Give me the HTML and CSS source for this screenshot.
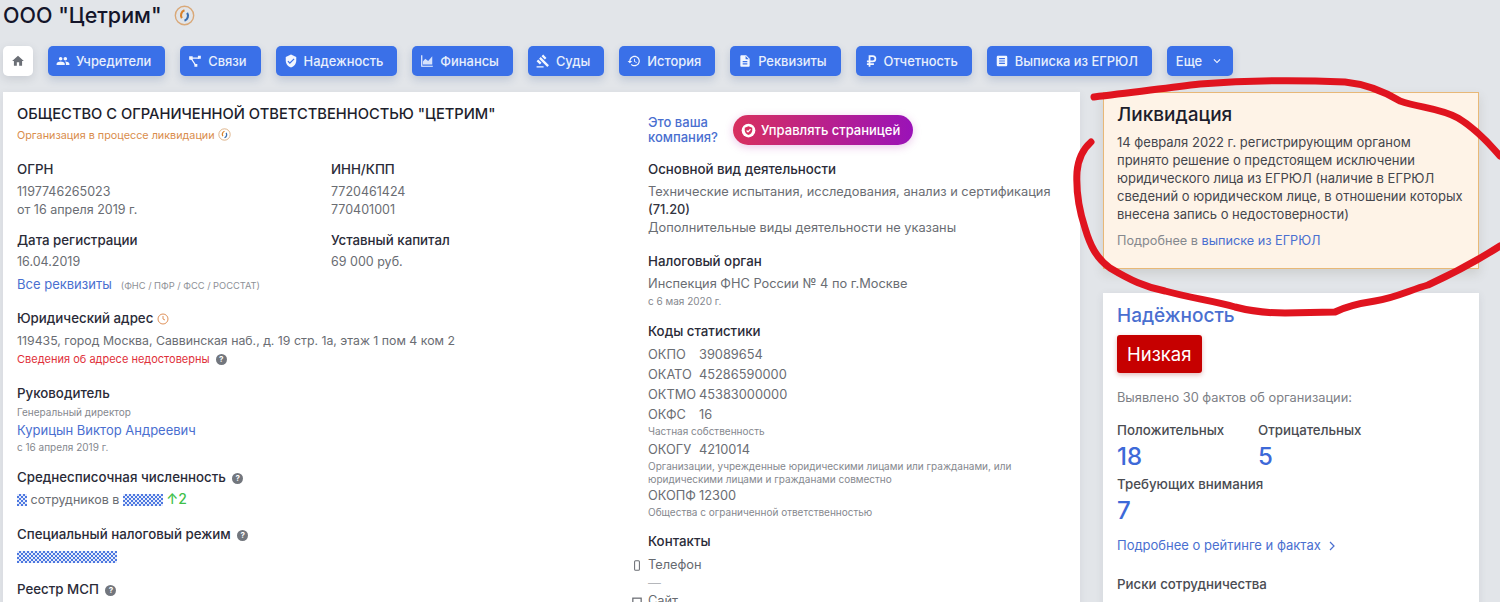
FILE: index.html
```html
<!DOCTYPE html>
<html lang="ru">
  <head>
    <meta charset="UTF-8" />
    <title>ООО "Цетрим"</title>
    <link rel="stylesheet" href="styles.css">
  </head>
  <body>
    <header class="title-row">
      <h1>ООО "Цетрим"</h1>
      <svg class="liq-icon liq-big" viewBox="0 0 24 24"><circle cx="12" cy="12" r="10.5"/><path class="liq-a" d="M12 6a6 6 0 0 0-3 9"/><path class="liq-b" d="M12 18a6 6 0 0 0 3-9"/></svg>
    </header>

    <nav class="nav">
      <a class="nav-home"><svg viewBox="0 0 24 24"><path d="M10 20v-6h4v6h5v-8h3L12 3 2 12h3v8z"/></svg></a>
      <a class="nav-btn"><svg viewBox="0 0 24 24"><path d="M16 11c1.66 0 3-1.34 3-3s-1.34-3-3-3-3 1.34-3 3 1.34 3 3 3zm-8 0c1.66 0 3-1.34 3-3S9.66 5 8 5 5 6.34 5 8s1.34 3 3 3zm0 2c-2.33 0-7 1.17-7 3.5V19h14v-2.5c0-2.33-4.67-3.5-7-3.5zm8 0c-.29 0-.62.02-.97.05 1.16.84 1.97 1.97 1.97 3.45V19h6v-2.5c0-2.33-4.67-3.5-7-3.5z"/></svg>Учредители</a>
      <a class="nav-btn"><svg viewBox="0 0 24 24"><path d="M2 4h6v6H2zM17 3h5v5h-5zM11 17h5v5h-5z"/><path class="thin" d="M5 7l8 12M5 7h14"/></svg>Связи</a>
      <a class="nav-btn"><svg viewBox="0 0 24 24"><path d="M12 1L3 5v6c0 5.55 3.84 10.74 9 12 5.16-1.26 9-6.45 9-12V5l-9-4zm-2 16l-4-4 1.41-1.41L10 14.17l6.59-6.59L18 9l-8 8z"/></svg>Надежность</a>
      <a class="nav-btn"><svg viewBox="0 0 24 24"><path d="M2 2h2v18h18v2H2z"/><path d="M5 18v-5l4-5 5 4 7-8v14z" opacity=".85"/></svg>Финансы</a>
      <a class="nav-btn"><svg viewBox="0 0 24 24"><path d="M1 21h12v2H1zM5.245 8.07l2.83-2.827 14.14 14.142-2.828 2.828zM12.317 1l5.657 5.656-2.83 2.83-5.654-5.66zM3.825 9.485l5.657 5.657-2.828 2.828-5.657-5.657z"/></svg>Суды</a>
      <a class="nav-btn"><svg viewBox="0 0 24 24"><path d="M13 3c-4.97 0-9 4.03-9 9H1l3.89 3.89.07.14L9 12H6c0-3.87 3.13-7 7-7s7 3.13 7 7-3.13 7-7 7c-1.93 0-3.68-.79-4.94-2.06l-1.42 1.42C8.27 19.99 10.51 21 13 21c4.97 0 9-4.03 9-9s-4.03-9-9-9zm-1 5v5l4.28 2.54.72-1.21-3.5-2.08V8H12z"/></svg>История</a>
      <a class="nav-btn"><svg viewBox="0 0 24 24"><path d="M14 2H6c-1.1 0-1.99.9-1.99 2L4 20c0 1.1.89 2 1.99 2H18c1.1 0 2-.9 2-2V8l-6-6zm2 16H8v-2h8v2zm0-4H8v-2h8v2zm-3-5V3.5L18.5 9H13z"/></svg>Реквизиты</a>
      <a class="nav-btn"><svg viewBox="0 0 24 24"><path d="M8 2h7a6 6 0 0 1 0 12h-4v2h6v3h-6v3H8v-3H5v-3h3v-2H5v-3h3zm3 3v6h4a3 3 0 0 0 0-6z"/></svg>Отчетность</a>
      <a class="nav-btn"><svg viewBox="0 0 24 24"><path d="M5 3h14a2 2 0 0 1 2 2v14a2 2 0 0 1-2 2H5a2 2 0 0 1-2-2V5a2 2 0 0 1 2-2zm2 4v2h10V7zm0 4v2h10v-2zm0 4v2h10v-2z"/></svg>Выписка из ЕГРЮЛ</a>
      <a class="nav-btn nav-more">Еще<svg viewBox="0 0 24 24"><path d="M7.41 8.59L12 13.17l4.59-4.58L18 10l-6 6-6-6z"/></svg></a>
    </nav>

    <div class="layout">
      <main class="card-main">
        <div class="col-info">
          <h2 class="org-name">ОБЩЕСТВО С ОГРАНИЧЕННОЙ ОТВЕТСТВЕННОСТЬЮ "ЦЕТРИМ"</h2>
          <div class="org-status">Организация в процессе ликвидации
            <svg class="liq-icon" viewBox="0 0 24 24"><circle cx="12" cy="12" r="10.5"/><path class="liq-a" d="M12 6a6 6 0 0 0-3 9"/><path class="liq-b" d="M12 18a6 6 0 0 0 3-9"/></svg>
          </div>

          <div class="pair pair-first">
            <div>
              <div class="label">ОГРН</div>
              <div class="value">1197746265023</div>
              <div class="value">от 16 апреля 2019 г.</div>
            </div>
            <div>
              <div class="label">ИНН/КПП</div>
              <div class="value">7720461424</div>
              <div class="value">770401001</div>
            </div>
          </div>
          <div class="pair pair-next">
            <div>
              <div class="label">Дата регистрации</div>
              <div class="value">16.04.2019</div>
            </div>
            <div>
              <div class="label">Уставный капитал</div>
              <div class="value">69 000 руб.</div>
            </div>
          </div>
          <div class="all-req"><a class="link">Все реквизиты</a><span class="req-note">(ФНС / ПФР / ФСС / РОССТАТ)</span></div>

          <section class="block block-addr">
            <div class="label">Юридический адрес
              <svg class="clock" viewBox="0 0 24 24"><circle cx="12" cy="12" r="10"/><path d="M12 6v6l4 2"/></svg>
            </div>
            <div class="value address">119435, город Москва, Саввинская наб., д. 19 стр. 1а, этаж 1 пом 4 ком 2</div>
            <div class="warn">Сведения об адресе недостоверны <span class="help">?</span></div>
          </section>

          <section class="block block-head">
            <div class="label">Руководитель</div>
            <div class="small">Генеральный директор</div>
            <a class="link name">Курицын Виктор Андреевич</a>
            <div class="small">с 16 апреля 2019 г.</div>
          </section>

          <section class="block block-staff">
            <div class="label">Среднесписочная численность <span class="help">?</span></div>
            <div class="value staff"><span class="masked mask-s"></span> сотрудников в <span class="masked mask-m"></span> <span class="up">↑2</span></div>
          </section>

          <section class="block block-tax">
            <div class="label">Специальный налоговый режим <span class="help">?</span></div>
            <div class="masked mask-l"></div>
          </section>

          <section class="block block-msp">
            <div class="label">Реестр МСП <span class="help">?</span></div>
          </section>
        </div>

        <div class="col-extra">
          <div class="claim">
            <a class="claim-text">Это ваша<br>компания?</a>
            <a class="claim-btn"><svg viewBox="0 0 24 24"><circle cx="12" cy="12" r="11"/><path class="claim-shield" d="M12 5l-6 2.5v4c0 3.4 2.5 6.4 6 7.5 3.5-1.100 6-4.100 6-7.500v-4z"/><path class="claim-check" d="M9 12l2.200 2.200L15.200 10"/></svg>Управлять страницей</a>
          </div>

          <section class="sub sub-okved">
            <div class="label">Основной вид деятельности</div>
            <div class="value">Технические испытания, исследования, анализ и сертификация</div>
            <div class="value"><b class="code">(71.20)</b></div>
            <div class="value">Дополнительные виды деятельности не указаны</div>
          </section>

          <section class="sub sub-tax">
            <div class="label">Налоговый орган</div>
            <div class="value">Инспекция ФНС России № 4 по г.Москве</div>
            <div class="small">с 6 мая 2020 г.</div>
          </section>

          <section class="sub sub-codes">
            <div class="label">Коды статистики</div>
            <div class="code-row"><span>ОКПО</span>39089654</div>
            <div class="code-row"><span>ОКАТО</span>45286590000</div>
            <div class="code-row"><span>ОКТМО</span>45383000000</div>
            <div class="code-row"><span>ОКФС</span>16</div>
            <div class="small code-note">Частная собственность</div>
            <div class="code-row"><span>ОКОГУ</span>4210014</div>
            <div class="small code-note code-note-wide">Организации, учрежденные юридическими лицами или гражданами, или<br>юридическими лицами и гражданами совместно</div>
            <div class="code-row"><span>ОКОПФ</span>12300</div>
            <div class="small code-note">Общества с ограниченной ответственностью</div>
          </section>

          <section class="sub sub-contacts">
            <div class="label">Контакты</div>
            <div class="contact"><svg class="contact-icon" viewBox="0 0 10 16"><rect x="1.500" y="1" width="7" height="14" rx="1.500"/></svg>Телефон</div>
            <div class="value dash">—</div>
            <div class="contact"><svg class="contact-icon" viewBox="0 0 12 10"><rect x="1" y="1" width="10" height="8"/></svg>Сайт</div>
          </section>
        </div>
      </main>

      <aside class="side">
        <div class="alert">
          <h3>Ликвидация</h3>
          <p>14 февраля 2022 г. регистрирующим органом<br>принято решение о предстоящем исключении<br>юридического лица из ЕГРЮЛ (наличие в ЕГРЮЛ<br>сведений о юридическом лице, в отношении которых<br>внесена запись о недостоверности)</p>
          <div class="alert-more">Подробнее в <a class="link">выписке из ЕГРЮЛ</a></div>
        </div>

        <div class="rating">
          <a class="rating-title">Надёжность</a>
          <div class="badge">Низкая</div>
          <div class="facts">Выявлено 30 фактов об организации:</div>
          <div class="fact-grid">
            <div>
              <div class="fact-label">Положительных</div>
              <div class="fact-num">18</div>
            </div>
            <div>
              <div class="fact-label">Отрицательных</div>
              <div class="fact-num">5</div>
            </div>
            <div class="fact-wide">
              <div class="fact-label">Требующих внимания</div>
              <div class="fact-num">7</div>
            </div>
          </div>
          <a class="link more">Подробнее о рейтинге и фактах<svg viewBox="0 0 10 12"><path d="M3 2l4 4-4 4"/></svg></a>
          <div class="fact-label risks">Риски сотрудничества</div>
        </div>
      </aside>
    </div>

    <!-- red marker drawn over the screenshot -->
    <svg class="scribble" viewBox="0 0 1500 602">
      <path d="M1094 97C1130 93 1165 88 1200 84C1250 80 1300 80 1345 82C1365 84 1385 92 1400 101C1420 108 1440 108 1458 118C1475 128 1488 142 1500 156"/>
      <path d="M1091 142C1082 150 1078 160 1077 172C1076 190 1079 210 1085 228C1090 245 1096 258 1110 268C1130 280 1145 287 1165 291C1190 298 1215 301 1235 307C1250 311 1265 313 1285 313L1335 312C1345 307 1355 304 1375 301C1395 298 1410 290 1428 285C1450 275 1475 262 1500 246"/>
    </svg>
  </body>
</html>
```

FILE: styles.css
```css
* {
  box-sizing: border-box;
}

html,
body {
  height: 602px;
  overflow: hidden;
}

body {
  position: relative;
  margin: 0;
  padding: 0 21px 0 3px;
  font-family: Inter, "Noto Sans", sans-serif;
  font-size: 13px;
  color: #666a70;
  background-color: #e2e5e9;
}

a {
  cursor: pointer;
}

.link {
  color: #4a6fd0;
}

/* title */
.title-row {
  display: flex;
  align-items: center;
  gap: 12px;
  height: 29px;
  padding-top: 1px;
}

h1 {
  margin: 0;
  font-size: 21.500px;
  font-weight: 500;
  color: #14152a;
}

.liq-icon {
  width: 13px;
  height: 13px;
  fill: none;
  vertical-align: -2px;
}

.liq-icon circle {
  stroke: #d9a878;
  stroke-width: 1.6;
}

.liq-a {
  stroke: #d9822b;
  stroke-width: 2.4;
}

.liq-b {
  stroke: #3b6fb0;
  stroke-width: 2.4;
}

.liq-big {
  width: 21px;
  height: 21px;
}

/* nav */
.nav {
  display: flex;
  gap: 15px;
  height: 30px;
  margin-top: 17px;
}

.nav-home {
  display: flex;
  align-items: center;
  justify-content: center;
  width: 30px;
  background-color: #fff;
  border-radius: 5px;
  box-shadow: 0 3px 8px rgba(60, 70, 90, 0.15);
}

.nav-home svg {
  width: 14px;
  height: 14px;
  fill: #6b6f76;
}

.nav-btn {
  display: flex;
  align-items: center;
  gap: 6px;
  padding: 0 14px 0 8px;
  font-size: 12.900px;
  font-weight: 500;
  color: #e8effc;
  white-space: nowrap;
  background-color: #3a70e8;
  border-radius: 5px;
  box-shadow: 0 4px 8px rgba(50, 80, 140, 0.2);
}

.nav-btn svg {
  width: 14px;
  height: 14px;
  fill: #f2f6ff;
}

.nav-btn .thin {
  fill: none;
  stroke: #f2f6ff;
  stroke-width: 2;
}

.nav-more {
  gap: 8px;
  padding: 0 9px;
}

/* main columns */
.layout {
  display: flex;
  gap: 23px;
  margin-top: 16px;
}

.card-main {
  display: flex;
  width: 1077px;
  height: 520px;
  overflow: hidden;
  background-color: #fff;
  box-shadow: 0 2px 8px rgba(60, 70, 90, 0.08);
}

.col-info {
  width: 645px;
  padding: 13px 0 0 14px;
}

.col-extra {
  width: 432px;
  padding: 23px 0 0 0;
}

.org-name {
  margin: 0;
  font-size: 14.700px;
  line-height: 18px;
  font-weight: 500;
  color: #1d1e2c;
}

.org-status {
  margin-top: 5px;
  font-size: 10.800px;
  line-height: 16px;
  color: #d98d4c;
}

.label {
  font-size: 13.300px;
  line-height: 18px;
  font-weight: 500;
  color: #2a2b38;
}

.value {
  font-size: 12.800px;
  line-height: 18px;
  color: #6a6d73;
}

.col-info .value {
  font-size: 12.500px;
}

.col-info .address {
  font-size: 12.300px;
}

.small {
  font-size: 10px;
  line-height: 14px;
  color: #85888e;
}

.code {
  font-weight: 500;
  color: #33343f;
}

.pair {
  display: grid;
  grid-template-columns: 314px 1fr;
}

.pair-first {
  margin-top: 16px;
}

.pair-first .label {
  margin-bottom: 5px;
}

.pair-next {
  margin-top: 12px;
}

.pair-next .label {
  margin-bottom: 4px;
}

.all-req {
  margin-top: 4px;
  line-height: 18px;
}

.req-note {
  margin-left: 9px;
  font-size: 9.300px;
  color: #8d9096;
}

.clock {
  width: 12px;
  height: 12px;
  fill: none;
  stroke: #e0925a;
  stroke-width: 2;
  vertical-align: -2px;
}

.help {
  display: inline-block;
  width: 11px;
  height: 11px;
  margin-left: 3px;
  font-size: 8px;
  line-height: 11px;
  font-weight: 700;
  text-align: center;
  color: #fff;
  background-color: #72767d;
  border-radius: 50%;
  vertical-align: 1px;
}

.warn {
  font-size: 11px;
  line-height: 18px;
  color: #e0303a;
}

.block-addr {
  margin-top: 14px;
}

.block-addr .label {
  margin-bottom: 5px;
}

.block-head {
  margin-top: 16px;
}

.block-head .small {
  margin-top: 3px;
}

.name {
  display: block;
  margin-top: 2px;
  line-height: 18px;
}

.block-head .name + .small {
  margin-top: 1px;
}

.block-staff {
  margin-top: 14px;
}

.block-staff .label {
  margin-bottom: 4px;
}

.block-tax {
  margin-top: 16px;
}

.block-tax .label {
  margin-bottom: 5px;
}

.block-msp {
  margin-top: 16px;
}

.masked {
  display: inline-block;
  height: 12px;
  background: repeating-conic-gradient(#4d78e0 0 25%, #e6ecfb 0 50%) 0 0 / 4px 4px;
  vertical-align: -2px;
}

.mask-s {
  width: 10px;
}

.mask-m {
  width: 40px;
}

.mask-l {
  width: 100px;
}

.up {
  font-size: 14px;
  font-weight: 500;
  color: #3fbf4a;
}

/* right part of main card */
.claim {
  display: flex;
  align-items: center;
  gap: 15px;
  height: 30px;
}

.claim-text {
  font-size: 13px;
  line-height: 15px;
  font-weight: 500;
  color: #4a6fd0;
}

.claim-btn {
  display: flex;
  align-items: center;
  gap: 5px;
  height: 30px;
  padding: 0 13px 0 8px;
  font-size: 13px;
  font-weight: 500;
  color: #fff;
  white-space: nowrap;
  background: linear-gradient(90deg, #d8305f, #9a12b8);
  border-radius: 15px;
  box-shadow: 0 2px 8px rgba(170, 30, 170, 0.25);
}

.claim-btn svg {
  width: 15px;
  height: 15px;
  fill: #fff;
}

.claim-shield {
  fill: #d8305f;
}

.claim-check {
  fill: none;
  stroke: #fff;
  stroke-width: 2;
}

.sub .label {
  margin-bottom: 5px;
}

.sub-okved {
  margin-top: 15px;
}

.sub-tax {
  margin-top: 15px;
}

.sub-tax .small {
  margin-top: 1px;
}

.sub-codes {
  margin-top: 14px;
}

.sub-contacts {
  margin-top: 13px;
}

.sub-contacts .label {
  margin-bottom: 6px;
}

.code-row {
  font-size: 12.800px;
  line-height: 20px;
  color: #6a6d73;
}

.code-row span {
  display: inline-block;
  width: 51px;
}

.code-note {
  margin-bottom: 2px;
  font-size: 10px;
  line-height: 13px;
}

.code-note-wide {
  margin-bottom: 0;
}

.contact {
  position: relative;
  font-size: 12.800px;
  line-height: 18px;
}

.contact-icon {
  position: absolute;
  top: 4px;
  left: -16px;
  width: 10px;
  height: 11px;
  fill: none;
  stroke: #6a6d73;
  stroke-width: 1.500;
}

.dash {
  color: #b5b7bb;
}

/* sidebar */
.side {
  width: 376px;
}

.alert {
  height: 177px;
  padding: 11px 13px 0;
  background-color: #fef3e7;
  border: 1px solid #e8b877;
  box-shadow: 0 5px 10px rgba(90, 80, 60, 0.15);
}

.alert h3 {
  margin: 0;
  font-size: 19px;
  line-height: 22px;
  font-weight: 500;
  color: #1d1e2c;
}

.alert p {
  margin: 7px 0 0;
  font-size: 13px;
  line-height: 18px;
  color: #44464c;
}

.alert-more {
  margin-top: 9px;
  font-size: 12.700px;
  line-height: 18px;
  color: #85888e;
}

.rating {
  height: 320px;
  margin-top: 24px;
  padding: 12px 14px 0;
  background-color: #fff;
  box-shadow: 0 2px 8px rgba(60, 70, 90, 0.1);
}

.rating-title {
  display: block;
  font-size: 19px;
  line-height: 22px;
  font-weight: 500;
  color: #4a6fd0;
}

.badge {
  display: inline-block;
  height: 38px;
  margin-top: 8px;
  padding: 0 10px;
  font-size: 18.500px;
  line-height: 38px;
  color: #fff;
  background-color: #c60000;
  border-radius: 3px;
  box-shadow: 0 2px 5px rgba(160, 30, 30, 0.3);
}

.facts {
  margin-top: 16px;
  font-size: 12.800px;
  line-height: 18px;
  color: #7d8086;
}

.fact-grid {
  display: grid;
  grid-template-columns: 141px 1fr;
  margin-top: 14px;
  row-gap: 3px;
}

.fact-wide {
  grid-column: span 2;
}

.fact-label {
  font-size: 13.300px;
  line-height: 18px;
  font-weight: 500;
  color: #4a4c52;
}

.fact-num {
  margin-top: 3px;
  font-size: 24px;
  line-height: 30px;
  font-weight: 500;
  color: #3d69d8;
}

.more {
  display: block;
  margin-top: 10px;
  line-height: 18px;
}

.more svg {
  width: 10px;
  height: 12px;
  margin-left: 6px;
  fill: none;
  stroke: #4a6fd0;
  stroke-width: 1.200;
  vertical-align: -2px;
}

.risks {
  margin-top: 21px;
}

/* marker */
.scribble {
  position: absolute;
  top: 0;
  left: 0;
  width: 1500px;
  height: 602px;
  pointer-events: none;
}

.scribble path {
  fill: none;
  stroke: #e0141f;
  stroke-width: 7;
  stroke-linecap: round;
  stroke-linejoin: round;
}
```
